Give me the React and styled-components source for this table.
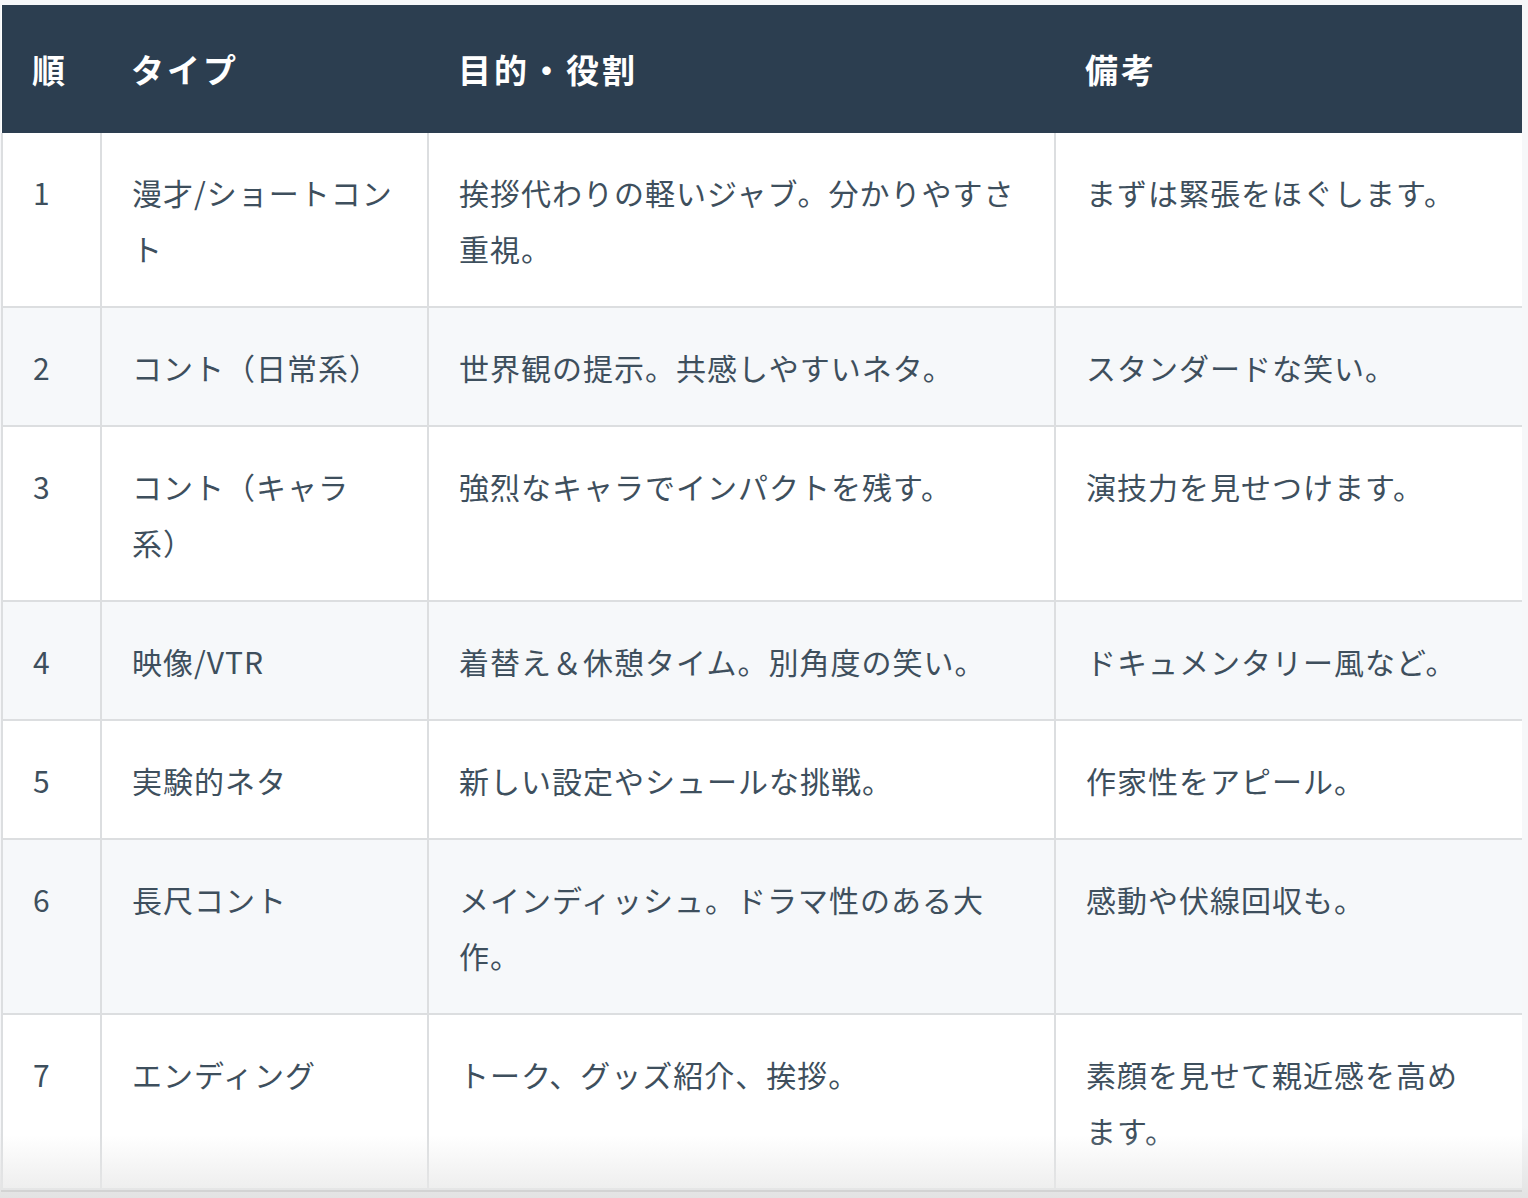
import styled, { createGlobalStyle } from 'styled-components';

const GlobalStyle = createGlobalStyle`
  html, body {
    margin: 0;
    padding: 0;
    background: #f6f7f9;
  }
  body {
    font-family: "Noto Sans CJK JP", "Noto Sans", sans-serif;
    color: #3e4f5d;
  }
`

const Page = styled.div`
  padding: 5px 6px 0 1px;
  height: 1198px;
  box-sizing: border-box;
  overflow: hidden;
  background: linear-gradient(180deg, #f6f7f9 0%, #f6f7f9 94%, #e3e3e3 100%);
`

const Frame = styled.div`
  position: relative;
  width: 1521px;
  height: 1187px;
  overflow: hidden;
  border-bottom: 2px solid #d3d3d3;
  box-sizing: border-box;

  &:after {
    content: "";
    position: absolute;
    left: 0;
    right: 0;
    bottom: 0;
    height: 55px;
    background: linear-gradient(180deg, rgba(232,232,232,0) 0%, rgba(232,232,232,0.75) 100%);
    pointer-events: none;
  }
`

const Table = styled.table`
  width: 1521px;
  border-collapse: collapse;
  table-layout: fixed;
  background: #fff;
`

const HeadCell = styled.th`
  background: #2c3e50;
  color: #fff;
  font-weight: 700;
  font-size: 33px;
  letter-spacing: 3px;
  text-align: left;
  height: 128px;
  padding: 0 30px;
  box-sizing: border-box;
`

const Row = styled.tr`
  background: ${p => (p.$striped ? '#f6f8fa' : '#fff')};
`

const Cell = styled.td`
  border: 2px solid #dcdee0;
  border-top: ${p => (p.$first ? 'none' : '2px solid #dcdee0')};
  padding: 31px 36px 30px 30px;
  font-size: 30px;
  line-height: 56px;
  letter-spacing: 1px;
  vertical-align: top;
  word-break: normal;
  text-spacing-trim: space-all;

  &:nth-child(2) {
    padding-right: 24px;
  }
`

const rows = [
  ['1', '漫才/ショートコント', '挨拶代わりの軽いジャブ。分かりやすさ重視。', 'まずは緊張をほぐします。'],
  ['2', 'コント（日常系）', '世界観の提示。共感しやすいネタ。', 'スタンダードな笑い。'],
  ['3', 'コント（キャラ系）', '強烈なキャラでインパクトを残す。', '演技力を見せつけます。'],
  ['4', '映像/VTR', '着替え＆休憩タイム。別角度の笑い。', 'ドキュメンタリー風など。'],
  ['5', '実験的ネタ', '新しい設定やシュールな挑戦。', '作家性をアピール。'],
  ['6', '長尺コント', 'メインディッシュ。ドラマ性のある大作。', '感動や伏線回収も。'],
  ['7', 'エンディング', 'トーク、グッズ紹介、挨拶。', '素顔を見せて親近感を高めます。']
]

const App = () => {
  return (
    <Page>
      <GlobalStyle />
      <Frame>
        <Table>
          <colgroup>
            <col style={{ width: 99 }} />
            <col style={{ width: 327 }} />
            <col style={{ width: 627 }} />
            <col style={{ width: 468 }} />
          </colgroup>
          <thead>
            <tr>
              <HeadCell>順</HeadCell>
              <HeadCell>タイプ</HeadCell>
              <HeadCell>目的・役割</HeadCell>
              <HeadCell>備考</HeadCell>
            </tr>
          </thead>
          <tbody>
            {rows.map((r, i) =>
              <Row key={r[0]} $striped={i % 2 === 1}>
                {r.map((c, j) => <Cell key={j} $first={i === 0}>{c}</Cell>)}
              </Row>
            )}
          </tbody>
        </Table>
      </Frame>
    </Page>
  )
}

export default App
